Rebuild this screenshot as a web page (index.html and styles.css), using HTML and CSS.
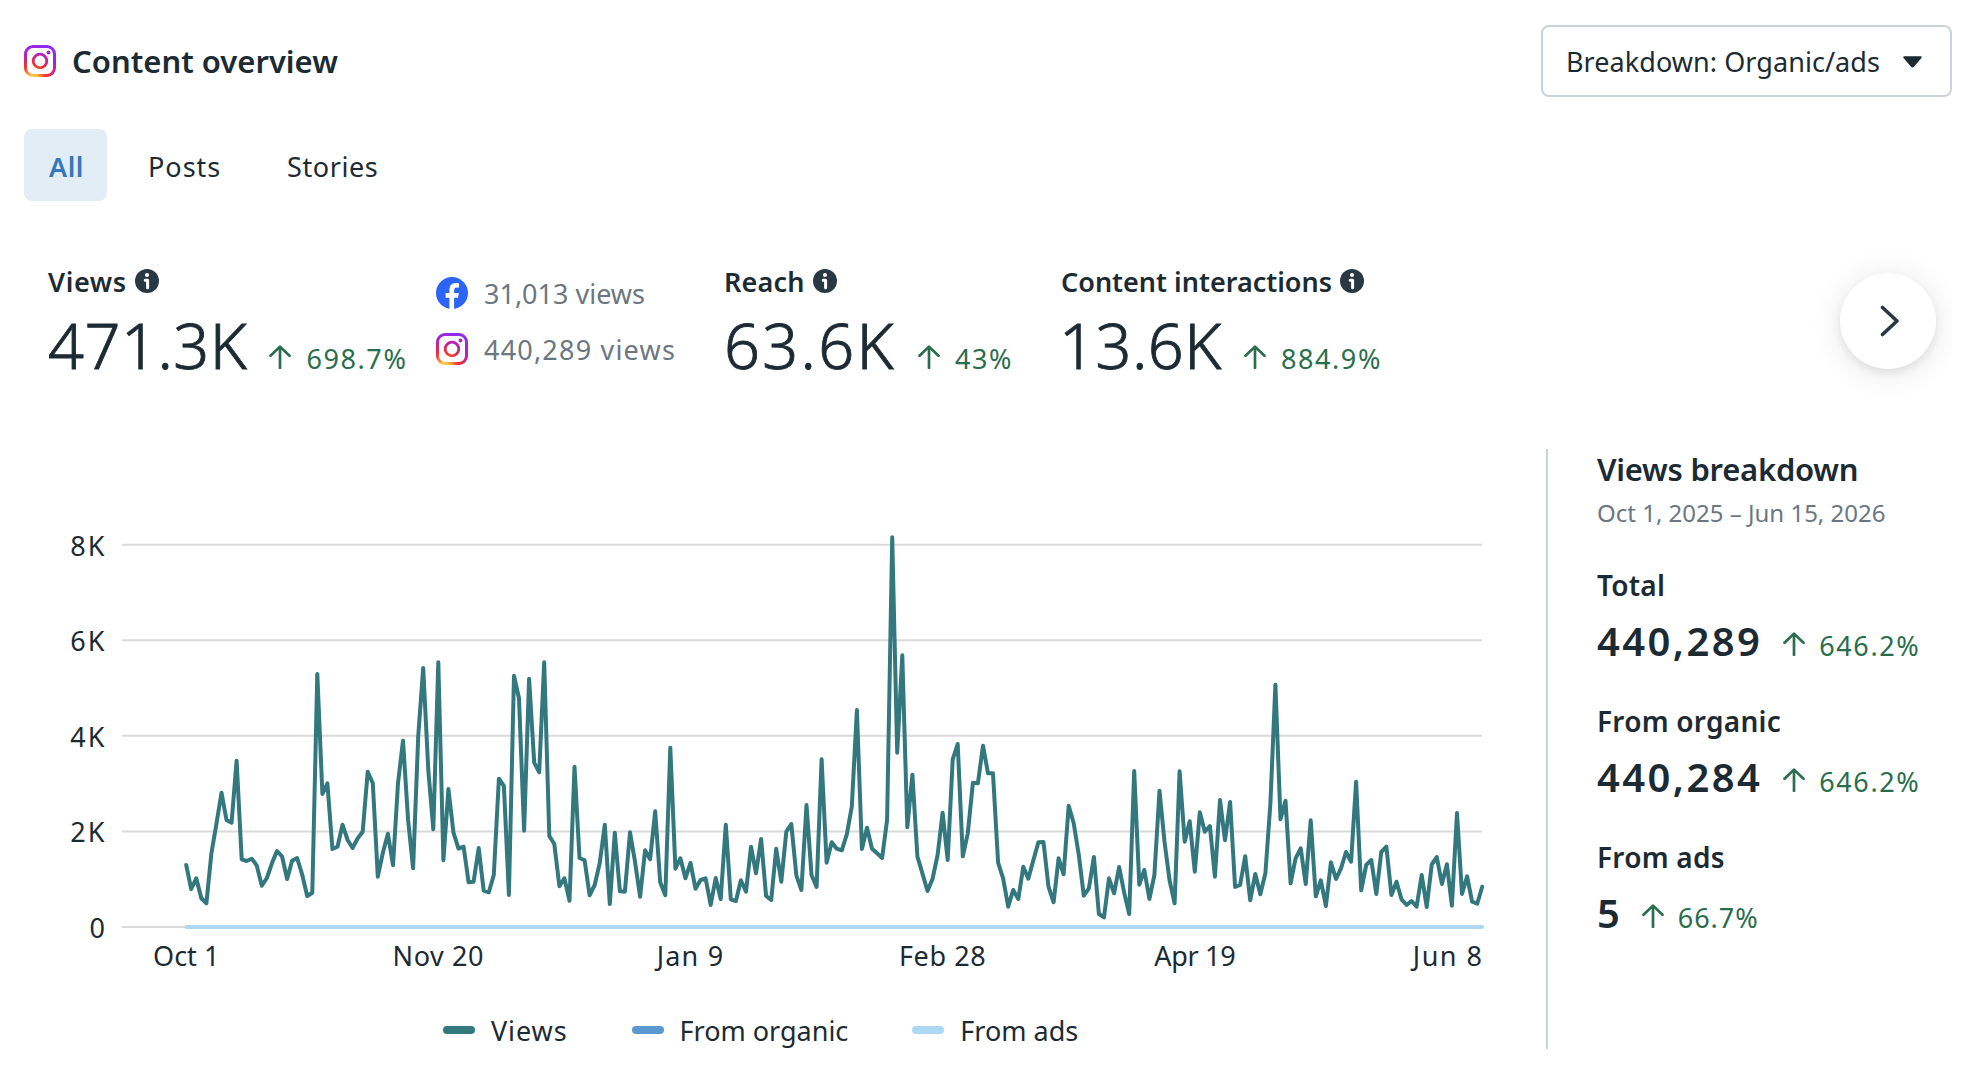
FILE: index.html
```html
<!DOCTYPE html>
<html lang="en">
<head>
  <meta charset="UTF-8" />
  <title>Content overview</title>
  <link rel="stylesheet" href="styles.css">
</head>
<body>
  <svg class="defs" width="0" height="0">
    <defs>
      <radialGradient id="igGradient" gradientUnits="userSpaceOnUse" cx="9" cy="33" r="34">
        <stop offset="0" stop-color="#ffd84a" />
        <stop offset="0.14" stop-color="#fdb840" />
        <stop offset="0.34" stop-color="#f5452f" />
        <stop offset="0.48" stop-color="#e02c46" />
        <stop offset="0.76" stop-color="#b41fc8" />
        <stop offset="1" stop-color="#8a2df0" />
      </radialGradient>
      <symbol id="instagram" viewBox="0 0 32 32">
        <rect x="1.5" y="1.5" width="29" height="29" rx="7.5" fill="none" stroke="url(#igGradient)" stroke-width="3" />
        <circle cx="16" cy="16" r="6.8" fill="none" stroke="url(#igGradient)" stroke-width="2.8" />
        <circle cx="24.5" cy="7.5" r="1.9" fill="url(#igGradient)" />
      </symbol>
      <symbol id="facebook" viewBox="0 0 32 32">
        <circle cx="16" cy="16" r="16" fill="#2b64f6" />
        <path d="M13.4 32V20.8H9.6v-4.9h3.8v-2.4c0-5 2.3-7.4 7-7.4.9 0 2 .1 2.6.3v4.3c-.5-.1-1.2-.1-2-.1-2.2 0-2.9.9-2.9 3.1v2.2h4.7l-.8 4.9h-3.9V32z" fill="#fff" />
      </symbol>
      <symbol id="info" viewBox="0 0 24 24">
        <circle cx="12" cy="12" r="12" fill="#283943" />
        <circle cx="12" cy="6" r="2.1" fill="#fff" />
        <path d="M10.2 11.200h2.400v7.600" fill="none" stroke="#fff" stroke-width="3" stroke-linecap="round" stroke-linejoin="round" />
      </symbol>
      <symbol id="arrowUp" viewBox="0 0 22 24">
        <path d="M11 23V2M1.500 10.800L11 1.600l9.500 9.200" fill="none" stroke="#296e4d" stroke-width="2.700" stroke-linecap="round" stroke-linejoin="round" />
      </symbol>
    </defs>
  </svg>

  <div class="card">
    <header class="header">
      <svg class="brand-icon"><use href="#instagram" /></svg>
      <h1>Content overview</h1>
      <button class="breakdown-select">
        <span>Breakdown: Organic/ads</span>
        <svg class="caret" viewBox="0 0 19 12"><path d="M1.2.2h16.6q1.500.3.6 1.700L11 10.800q-1.500 1.600-3 0L.6 1.900Q-.3.500 1.200.2z" fill="#1c2b33" /></svg>
      </button>
    </header>

    <nav class="tabs">
      <a class="tab active">All</a>
      <a class="tab posts">Posts</a>
      <a class="tab stories">Stories</a>
    </nav>

    <section class="metrics">
      <div class="metric metric-views">
        <div class="metric-label"><span>Views</span><svg class="info"><use href="#info" /></svg></div>
        <div class="metric-row"><span class="metric-value">471.3K</span><svg class="arrow"><use href="#arrowUp" /></svg><span class="change">698.7%</span></div>
      </div>
      <div class="sources">
        <div class="source"><svg class="brand-icon"><use href="#facebook" /></svg><span>31,013 views</span></div>
        <div class="source source-ig"><svg class="brand-icon"><use href="#instagram" /></svg><span>440,289 views</span></div>
      </div>
      <div class="metric metric-reach">
        <div class="metric-label"><span>Reach</span><svg class="info"><use href="#info" /></svg></div>
        <div class="metric-row"><span class="metric-value">63.6K</span><svg class="arrow"><use href="#arrowUp" /></svg><span class="change">43%</span></div>
      </div>
      <div class="metric metric-interactions">
        <div class="metric-label"><span>Content interactions</span><svg class="info"><use href="#info" /></svg></div>
        <div class="metric-row"><span class="metric-value">13.6K</span><svg class="arrow"><use href="#arrowUp" /></svg><span class="change">884.9%</span></div>
      </div>
      <div class="next-wrap">
        <button class="next">
          <svg width="20" height="32" viewBox="0 0 20 32"><path d="M2.500 2.500L17 16 2.500 29.500" fill="none" stroke="#283943" stroke-width="3.600" stroke-linecap="round" stroke-linejoin="round" /></svg>
        </button>
      </div>
    </section>

    <section class="content">
      <div class="chart-col">
        <svg class="chart" width="1500" height="534" viewBox="0 0 1500 534">
          <g id="grid"></g>
          <g id="yLabels" class="axis-label y-label" text-anchor="end"></g>
          <g id="xLabels" class="axis-label x-label" text-anchor="middle"></g>
          <polyline id="viewsLine" class="line line-views" />
          <path class="line line-ads" d="M186.500 478H1482" />
        </svg>
        <div class="legend">
          <div class="legend-item legend-views"><i class="swatch views"></i><span>Views</span></div>
          <div class="legend-item"><i class="swatch organic"></i><span>From organic</span></div>
          <div class="legend-item"><i class="swatch ads"></i><span>From ads</span></div>
        </div>
      </div>

      <aside class="breakdown">
        <h2>Views breakdown</h2>
        <p class="dates">Oct 1, 2025 – Jun 15, 2026</p>
        <div class="stat">
          <h3>Total</h3>
          <div class="stat-row"><span class="stat-value">440,289</span><svg class="arrow"><use href="#arrowUp" /></svg><span class="change">646.2%</span></div>
        </div>
        <div class="stat">
          <h3>From organic</h3>
          <div class="stat-row"><span class="stat-value">440,284</span><svg class="arrow"><use href="#arrowUp" /></svg><span class="change">646.2%</span></div>
        </div>
        <div class="stat stat-ads">
          <h3>From ads</h3>
          <div class="stat-row"><span class="stat-value">5</span><svg class="arrow"><use href="#arrowUp" /></svg><span class="change">66.7%</span></div>
        </div>
      </aside>
    </section>
  </div>
  <script src="chart.js"></script>
</body>
</html>
```
FILE: styles.css
```css
* {
  box-sizing: border-box;
}
body {
  margin: 0;
  background: #fff;
  color: #1c2b33;
  font-family: "Noto Sans", sans-serif;
  font-size: 27px;
  line-height: 40px;
}
h1, h2, h3, p {
  margin: 0;
}
button {
  font: inherit;
  color: inherit;
  background: #fff;
  padding: 0;
}
svg {
  display: block;
  flex: none;
}
.defs {
  position: absolute;
}
.card {
  width: 1978px;
  height: 1068px;
  overflow: hidden;
}

/* header */
.header {
  display: flex;
  align-items: center;
  height: 72px;
  margin: 25px 26px 0 24px;
}
.brand-icon {
  width: 32px;
  height: 32px;
}
h1 {
  margin-left: 16px;
  font-size: 31px;
  font-weight: 600;
}
.breakdown-select {
  display: flex;
  align-items: center;
  justify-content: space-between;
  width: 411px;
  height: 72px;
  margin-left: auto;
  padding: 2px 28px 0 23px;
  border: 2px solid #cbd2d9;
  border-radius: 8px;
  letter-spacing: 0.06px;
}
.caret {
  width: 19px;
  height: 12px;
}

/* tabs */
.tabs {
  display: flex;
  gap: 16px;
  margin: 32px 0 0 24px;
}
.tab {
  height: 72px;
  padding: 0 24px 0 25px;
  border-radius: 8px;
  line-height: 75px;
}
.tab.active {
  width: 83px;
  background: #e3edf6;
  color: #3578bc;
  font-weight: 600;
  letter-spacing: 0.5px;
}
.posts {
  width: 123px;
  letter-spacing: 1px;
}
.stories {
  letter-spacing: 0.6px;
}

/* metrics */
.metrics {
  display: flex;
  height: 248px;
  padding: 60px 0 0 48px;
}
.metric-label {
  display: flex;
  align-items: center;
  height: 40px;
  gap: 8px;
  font-weight: 600;
}
.metric-label span {
  padding-top: 2px;
}
.info {
  width: 24px;
  height: 24px;
}
.metric-row {
  display: flex;
  align-items: baseline;
  height: 80px;
  line-height: 88px;
}
.metric-value {
  font-size: 63px;
  font-weight: 300;
  -webkit-text-stroke: 0.9px #1c2b33;
}
.arrow {
  width: 22px;
  height: 24px;
  margin: 0 14px 0 22px;
}
.change {
  color: #296e4d;
  letter-spacing: 1.6px;
}
.metric-views {
  width: 388px;
}
.metric-views .metric-label {
  letter-spacing: 0.6px;
}
.metric-views .metric-value {
  letter-spacing: 0.5px;
}
.metric-row .change {
  margin-left: 1px;
}
.sources {
  width: 288px;
  padding-top: 12px;
  color: #6b7780;
}
.source {
  display: flex;
  align-items: center;
  height: 40px;
  margin-bottom: 16px;
  gap: 16px;
}
.source span {
  padding-top: 2px;
}
.source-ig {
  letter-spacing: 1.2px;
}
.metric-reach {
  width: 335px;
}
.metric-reach .metric-label {
  letter-spacing: 0.2px;
}
.metric-reach .metric-value {
  letter-spacing: 2.3px;
}
.metric-interactions {
  width: 662px;
}
.metric-interactions .metric-label {
  margin-left: 2px;
}
.metric-interactions .metric-value {
  letter-spacing: 0.5px;
}
/* the shadow is cut at the scroll area's right edge */
.next-wrap {
  width: 231px;
  height: 188px;
  margin-top: -40px;
  padding: 52px 0 0 119px;
  overflow: hidden;
}
.next {
  display: flex;
  align-items: center;
  justify-content: center;
  width: 96px;
  height: 96px;
  padding-left: 4px;
  border: 0;
  border-radius: 50%;
  box-shadow: 0 4px 8px rgba(0, 0, 0, 0.08), 0 4px 32px rgba(0, 0, 0, 0.1);
}

/* chart and breakdown */
.content {
  display: flex;
}
.chart-col {
  width: 1546px;
}
.axis-label {
  fill: #1c2b33;
}
.y-label {
  letter-spacing: 2px;
}
.grid-line {
  stroke: #dadada;
  stroke-width: 2;
}
.line {
  fill: none;
  stroke-width: 4;
  stroke-linecap: round;
  stroke-linejoin: round;
}
.line-views {
  stroke: #33787f;
}
.line-ads {
  stroke: #acd8f4;
}
.legend {
  display: flex;
  padding-left: 443px;
  gap: 64px;
  margin-top: 26px;
}
.legend-item {
  display: flex;
  align-items: center;
  gap: 16px;
}
.legend-views {
  letter-spacing: 0.9px;
}
.legend-item span {
  padding-top: 2px;
}
.swatch {
  width: 32px;
  height: 8px;
  border-radius: 4px;
}
.swatch.views { background: #33787f; }
.swatch.organic { background: #5b98d2; }
.swatch.ads { background: #acd8f4; }
.breakdown {
  width: 432px;
  height: 600px;
  padding-left: 49px;
  border-left: 2px solid #cbd2d9;
}
h2 {
  font-size: 31px;
  font-weight: 600;
  letter-spacing: -0.25px;
}
.dates {
  margin-top: 4px;
  color: #6b7780;
  font-size: 24px;
}
.stat {
  height: 136px;
  padding-top: 32px;
}
h3 {
  font-size: 28px;
  font-weight: 600;
  letter-spacing: 0.25px;
}
.stat-row {
  display: flex;
  align-items: baseline;
  height: 64px;
  line-height: 72px;
}
.stat-value {
  font-size: 40px;
  font-weight: 600;
  letter-spacing: 2.4px;
}
.stat-row .arrow {
  margin-left: 21px;
}
.stat-row .change {
  margin-left: 0;
}
.stat-ads .stat-value {
  letter-spacing: 0.8px;
}
.stat-ads .change {
  letter-spacing: 1px;
}
```
FILE: chart.js
```js
// daily views, Oct 1 - Jun 15, as heights above the zero line (286.75 units = 2K)
const views = [
  186, 114, 146, 86, 71, 221, 311, 403, 321, 313, 499, 203, 198, 205, 184, 124, 147, 191, 228, 212,
  144, 199, 207, 157, 93, 103, 759, 399, 431, 234, 241, 307, 261, 237, 266, 286, 466, 431, 151, 223,
  280, 185, 431, 559, 321, 176, 571, 777, 471, 293, 794, 200, 414, 283, 235, 241, 134, 136, 237, 109,
  104, 156, 445, 423, 96, 754, 686, 289, 745, 493, 464, 794, 273, 249, 122, 146, 79, 481, 207, 200,
  95, 126, 191, 307, 69, 283, 107, 106, 284, 196, 91, 230, 203, 347, 134, 95, 538, 175, 206, 146,
  192, 115, 141, 146, 66, 147, 84, 307, 83, 78, 140, 106, 241, 161, 264, 93, 81, 235, 136, 286,
  309, 154, 111, 366, 156, 120, 503, 193, 254, 235, 230, 278, 361, 651, 234, 298, 235, 221, 207, 321,
  1169, 523, 815, 299, 457, 211, 161, 108, 144, 216, 343, 201, 503, 549, 212, 281, 433, 431, 544, 461,
  461, 193, 146, 61, 111, 84, 181, 145, 201, 254, 255, 121, 74, 206, 158, 364, 311, 216, 94, 116,
  210, 39, 29, 146, 101, 180, 103, 39, 468, 127, 171, 84, 156, 409, 256, 141, 71, 467, 256, 317,
  166, 344, 286, 303, 151, 381, 260, 375, 120, 126, 212, 80, 159, 98, 161, 371, 727, 323, 379, 131,
  206, 236, 129, 320, 92, 140, 63, 194, 144, 176, 225, 196, 436, 110, 186, 201, 99, 225, 241, 96,
  136, 83, 66, 78, 61, 156, 60, 188, 210, 129, 188, 64, 342, 99, 152, 76, 70, 121
];
const ns = "http://www.w3.org/2000/svg";
const left = 186.2;
const right = 1482.2;
const zero = 478;
const step = (right - left) / (views.length - 1);

document.getElementById("viewsLine").setAttribute("points",
  views.map((v, i) => `${(left + i * step).toFixed(1)},${(zero - v / 3).toFixed(1)}`).join(" "));

function addText(parent, text, x, y) {
  const el = document.createElementNS(ns, "text");
  el.setAttribute("x", x);
  el.setAttribute("y", y);
  el.textContent = text;
  document.getElementById(parent).appendChild(el);
  return el;
}

["0", "2K", "4K", "6K", "8K"].forEach((label, i) => {
  const y = zero - i * 95.58;
  const line = document.createElementNS(ns, "line");
  line.setAttribute("class", "grid-line");
  line.setAttribute("x1", 122);
  line.setAttribute("x2", 1482);
  line.setAttribute("y1", y);
  line.setAttribute("y2", y);
  document.getElementById("grid").appendChild(line);
  addText("yLabels", label, i ? 106.5 : 107, y + 11);
});

// [label, letter spacing]
[["Oct 1", 0], ["Nov 20", 0.6], ["Jan 9", 1.2], ["Feb 28", 0.6], ["Apr 19", -0.3]].forEach(([label, spacing], i) => {
  addText("xLabels", label, left + i * 50 * step, 517).setAttribute("letter-spacing", spacing);
});
const last = addText("xLabels", "Jun 8", 1483.5, 517);
last.setAttribute("text-anchor", "end");
last.setAttribute("letter-spacing", 1.5);
```
